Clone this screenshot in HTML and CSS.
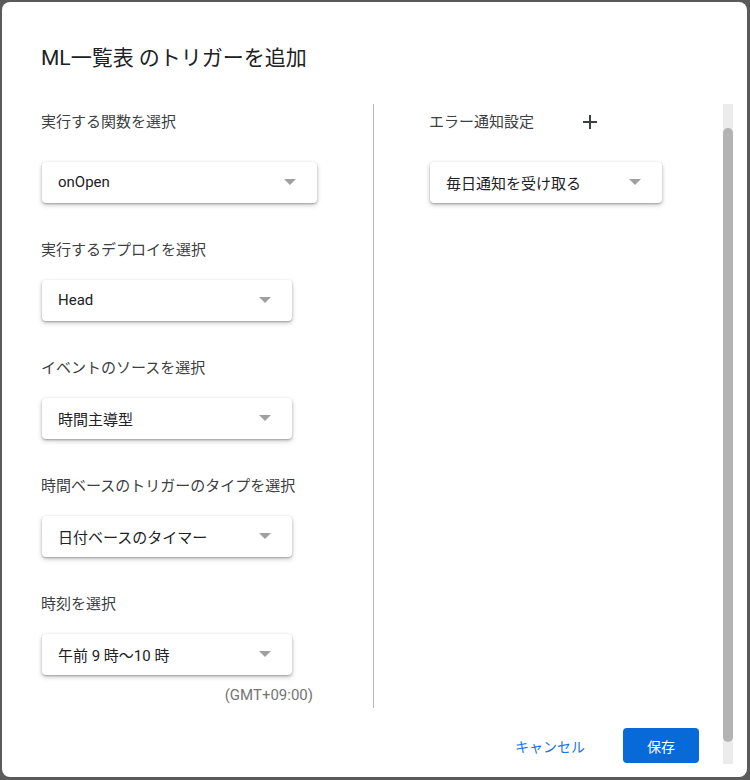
FILE: index.html
```html
<!doctype html>
<html>
<head>
<meta charset="utf-8">
<link rel="stylesheet" href="styles.css">
<title>トリガーを追加</title>
</head>

<body>

<div id="dialog">
	<div class="title">ML一覧表 のトリガーを追加</div>

	<div class="scroll">
		<div class="content">
			<div class="columns">
				<div class="col-left">
					<div class="label first">実行する関数を選択</div>
					<div class="select wide"><span>onOpen</span><i class="arrow"></i></div>

					<div class="label">実行するデプロイを選択</div>
					<div class="select"><span>Head</span><i class="arrow"></i></div>

					<div class="label">イベントのソースを選択</div>
					<div class="select"><span>時間主導型</span><i class="arrow"></i></div>

					<div class="label">時間ベースのトリガーのタイプを選択</div>
					<div class="select"><span>日付ベースのタイマー</span><i class="arrow"></i></div>

					<div class="label">時刻を選択</div>
					<div class="select"><span>午前 9 時～10 時</span><i class="arrow"></i></div>
					<div class="tz">(GMT+09:00)</div>
				</div>

				<div class="col-right">
					<div class="label first row">
						<span>エラー通知設定</span>
						<svg class="plus" width="14" height="14" viewBox="0 0 14 14">
							<path d="M7 0v14M0 7h14" stroke="#3c4043" stroke-width="2" fill="none"/>
						</svg>
					</div>
					<div class="select narrow"><span>毎日通知を受け取る</span><i class="arrow"></i></div>
				</div>
			</div>

			<div class="footer">
				<button class="btn-cancel">キャンセル</button>
				<button class="btn-save">保存</button>
			</div>
		</div>

		<div class="scrollbar"><div class="thumb"></div></div>
	</div>
</div>

</body>
</html>
```

FILE: styles.css
```css
*
{
	margin:0;
	padding:0;
	box-sizing:border-box;
}
body
{
	background:#5a5a5a;
	font-family:Roboto,"Noto Sans CJK JP",sans-serif;
	color:#202124;
}
#dialog
{
	width:745px;
	height:775px;
	margin:2px;
	background:#fff;
	border-radius:8px;
	padding-top:42px;
}
.title
{
	font-size:21px;
	line-height:28px;
	padding-left:39px;
	margin-bottom:32px;
	color:#202124;
}
.scroll
{
	display:flex;
	height:660px;
}
.content
{
	width:721px;
}
.columns
{
	display:flex;
	height:604px;
}
.col-left
{
	width:371px;
	padding:8px 0 0 40px;
}
.col-left .label
{
	margin-left:-1px;
}
.col-right
{
	flex:1;
	border-left:1px #b8b8b8 solid;
	padding:8px 0 0 55px;
}
.label
{
	font-size:15px;
	line-height:20px;
	color:#3c4043;
	margin-bottom:20px;
}
.label.first
{
	margin-bottom:30px;
}
.row
{
	display:flex;
	align-items:center;
}
.plus
{
	margin-left:49px;
}
.select
{
	display:flex;
	align-items:center;
	justify-content:space-between;
	width:250px;
	height:41px;
	margin-bottom:37px;
	padding:0 21px 1px 16px;
	border-radius:4px;
	background:#fff;
	box-shadow:0 1px 2px rgba(0,0,0,0.25),0 2px 5px rgba(0,0,0,0.22);
	font-size:15px;
	color:#202124;
}
.select.wide
{
	width:275px;
}
.select.narrow
{
	width:232px;
	margin-left:1px;
}
.arrow
{
	width:0;
	height:0;
	border-left:6px solid transparent;
	border-right:6px solid transparent;
	border-top:6px solid #a0a0a0;
}
.tz
{
	width:271px;
	margin-top:-27px;
	text-align:right;
	font-size:15px;
	line-height:20px;
	color:#757575;
}
.footer
{
	display:flex;
	justify-content:flex-end;
	align-items:center;
	margin-top:20px;
	padding-right:24px;
}
.footer button
{
	font-family:Roboto,"Noto Sans CJK JP",sans-serif;
	font-size:14px;
	border:none;
	height:35px;
	border-radius:4px;
	cursor:pointer;
}
.btn-cancel
{
	background:none;
	color:#1a73e8;
	padding:0 14px;
	margin-right:24px;
}
.btn-save
{
	background:#086ad8;
	color:#fff;
	width:76px;
}
.scrollbar
{
	width:10px;
	height:660px;
	background:#ebebeb;
	padding-top:24px;
	padding-bottom:22px;
}
.thumb
{
	height:100%;
	background:#b3b3b3;
	border-radius:5px;
}
```
